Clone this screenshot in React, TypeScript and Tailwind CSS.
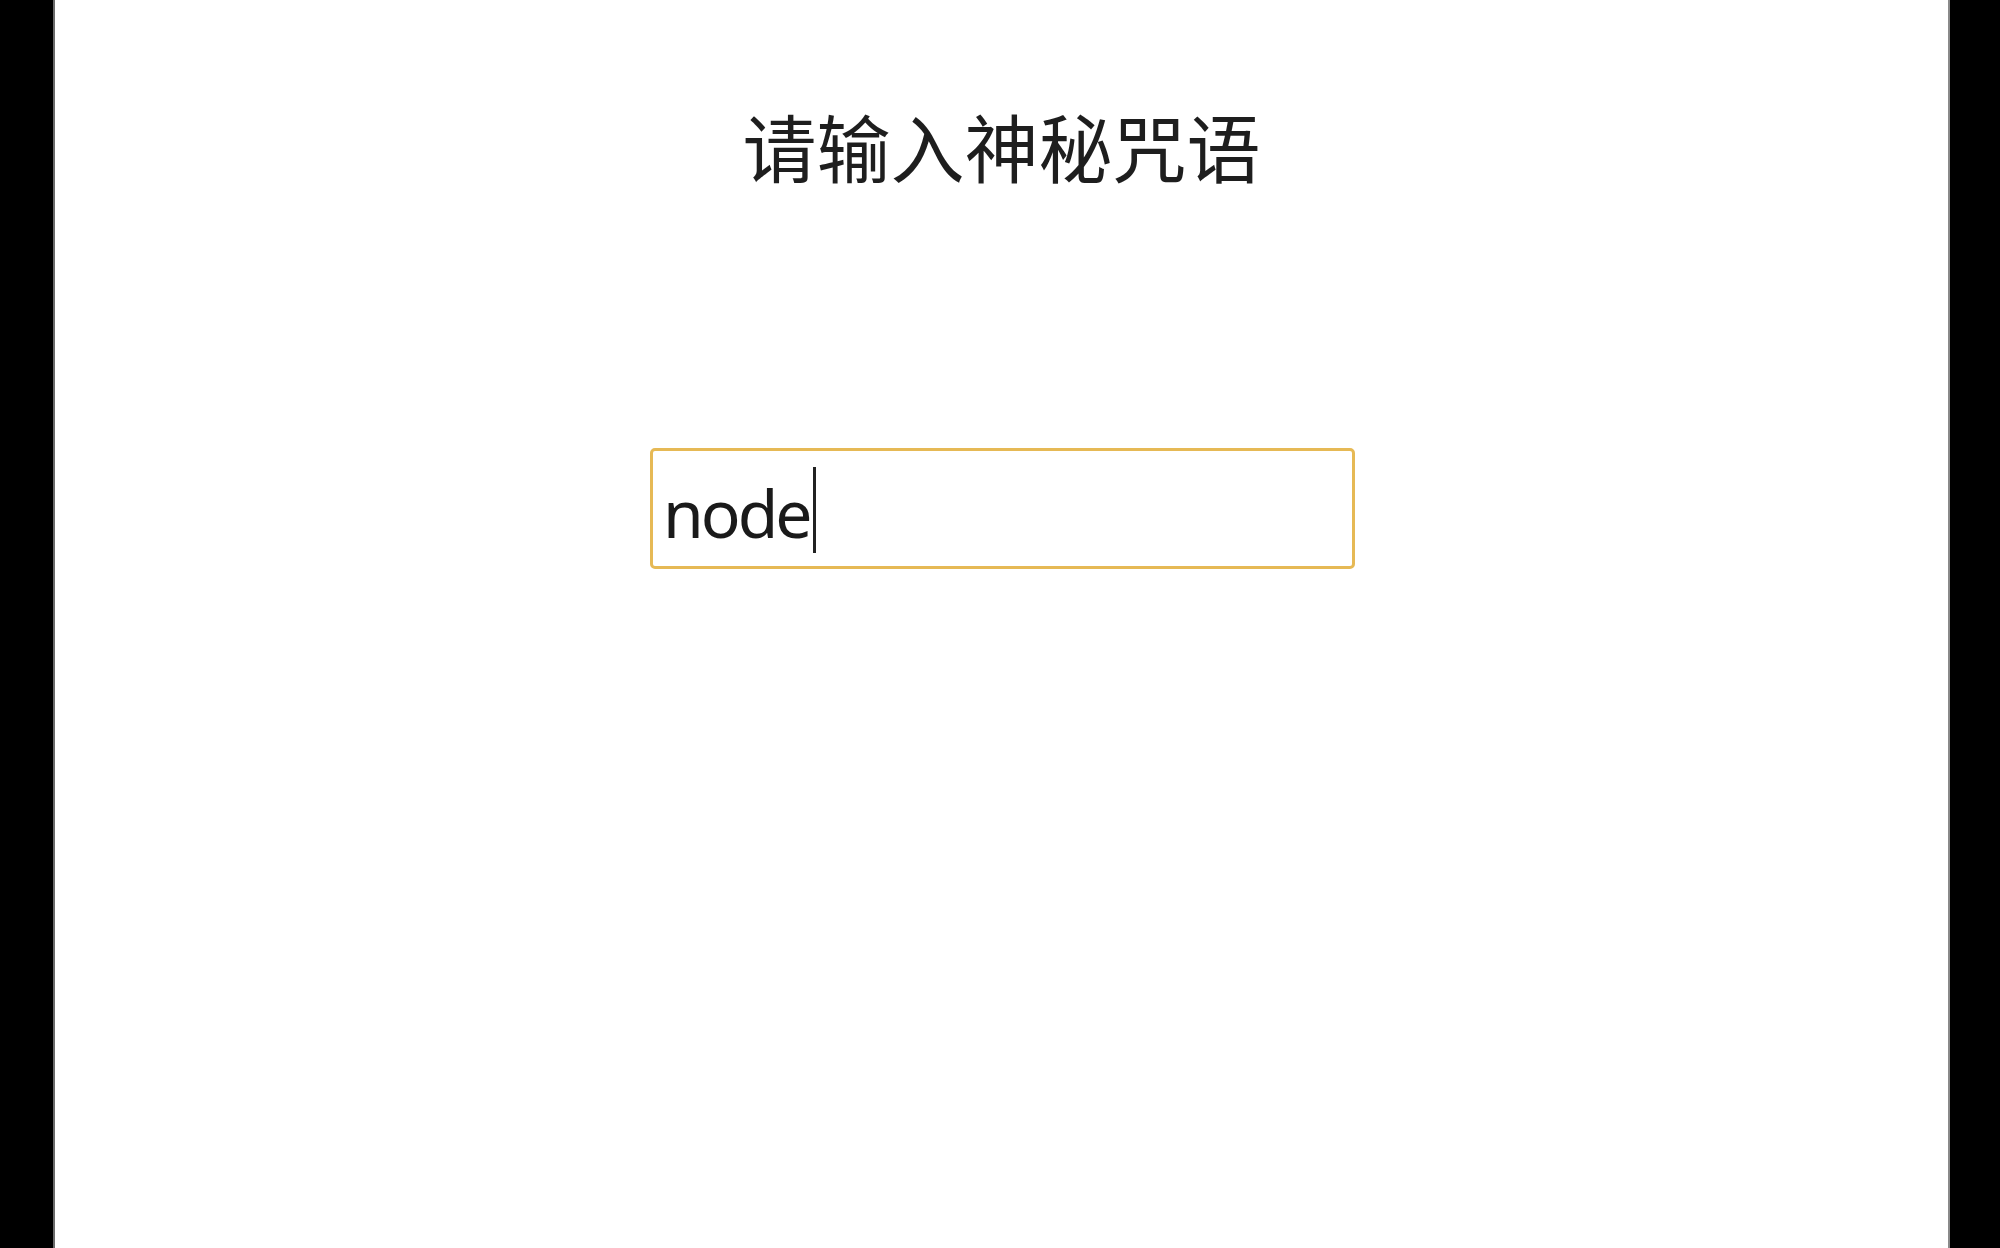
import React from "react";

export default function App() {
  return (
    <div className="flex h-[1248px] w-full bg-black">
      <div className="ml-[53px] w-[2px] bg-[#6b6b6b]" />
      <div className="flex w-[1893px] flex-col items-center bg-white">
        <h1
          className="mt-[108px] text-[74px] leading-none font-normal text-[#1e1e1e]"
          style={{ fontFamily: '"Noto Sans CJK SC", "Noto Sans", sans-serif' }}
        >
          请输入神秘咒语
        </h1>
        <div className="mt-[266px] ml-[2px] flex h-[121px] w-[705px] items-end rounded-[5px] border-[3px] border-[#e6b955] pl-[10px]">
          <span
            className="mb-[21px] text-[66px] leading-none tracking-[-3px] text-[#1a1a1a]"
            style={{ fontFamily: '"Noto Sans", sans-serif' }}
          >
            node
          </span>
          <span className="mb-[13px] ml-[3px] h-[86px] w-[3px] bg-[#222]" />
        </div>
      </div>
      <div className="w-[2px] bg-[#8a8a8a]" />
      <div className="flex-1 bg-black" />
    </div>
  );
}
